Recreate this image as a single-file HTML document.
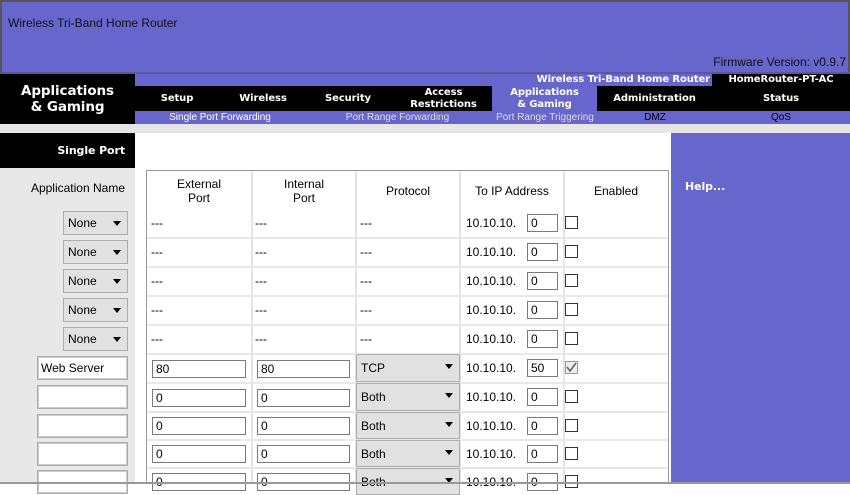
<!DOCTYPE html>
<html><head><meta charset="utf-8"><style>
*{margin:0;padding:0;box-sizing:border-box}
body{width:850px;height:484px;overflow:hidden;background:#fff;font-family:"Liberation Sans",Arial,sans-serif;font-size:12px;color:#000;position:relative}
.a{position:absolute}
.b{font-family:"DejaVu Sans",sans-serif;font-weight:bold;color:#fff;font-size:10px;text-align:center;line-height:12px;letter-spacing:-0.1px}
.tab{top:86px;height:25px;display:flex;align-items:center;justify-content:center}
.sub{top:111px;height:13px;font-size:10px;line-height:13px;color:#ddd;text-align:center}
.sel{background:#e1e1e1;border:1px solid #adadad;font-size:12px;padding-left:4px;line-height:22px}
.sel:after{content:"";position:absolute;right:6px;top:9px;border-left:4px solid transparent;border-right:4px solid transparent;border-top:5px solid #000}
.inp{background:#fff;border:1px solid #7a7a7a;font-size:12px;padding-left:3px;line-height:17px;height:18px}
.linp{background:#fff;border:1px solid #adadad;box-shadow:inset 0 0 0 1px #ccc;font-size:12px;padding-left:3px;line-height:22px;height:24px}
.cb{width:13px;height:13px;border:1px solid #333;background:#fff}
.hl{background:#e8e8e8;height:2px;left:147px;width:521px}
.vl{background:#e4e4e4;width:2px;top:171px;height:313px}
.d{font-size:12px}
</style></head><body>
<div class="a" style="left:0;top:0;width:850px;height:74px;background:#6666cc;border-left:2px solid #555;border-top:2px solid #555;border-bottom:2px solid #5a5a9a"></div>
<div class="a" style="left:8px;top:16px;font-size:12px;color:#111">Wireless Tri-Band Home Router</div>
<div class="a" style="right:4px;top:55px;font-size:12px;color:#111">Firmware Version: v0.9.7</div>
<div class="a" style="left:848px;top:0;width:2px;height:72px;background:#555"></div>
<div class="a" style="left:0;top:74px;width:135px;height:50px;background:#000"></div>
<div class="a b" style="left:0;top:83px;width:135px;font-size:13.5px;line-height:16px">Applications<br>&amp; Gaming</div>
<div class="a" style="left:135px;top:74px;width:715px;height:50px;background:#6666cc"></div>
<div class="a" style="left:135px;top:86px;width:357px;height:25px;background:#000"></div>
<div class="a" style="left:597px;top:86px;width:253px;height:25px;background:#000"></div>
<div class="a" style="left:712px;top:74px;width:138px;height:13px;background:#000"></div>
<div class="a b" style="left:500px;top:74px;width:212px;text-align:right;padding-right:2px">Wireless Tri-Band Home Router</div>
<div class="a b" style="left:712px;top:74px;width:138px">HomeRouter-PT-AC</div>
<div class="a b tab" style="left:135px;width:84px">Setup</div>
<div class="a b tab" style="left:221px;width:84px">Wireless</div>
<div class="a b tab" style="left:306px;width:84px">Security</div>
<div class="a b tab" style="left:395px;width:97px">Access<br>Restrictions</div>
<div class="a b tab" style="left:492px;width:105px">Applications<br>&amp; Gaming</div>
<div class="a b tab" style="left:597px;width:115px">Administration</div>
<div class="a b tab" style="left:712px;width:138px">Status</div>
<div class="a sub" style="left:135px;width:170px;color:#fff">Single Port Forwarding</div>
<div class="a sub" style="left:315px;width:165px">Port Range Forwarding</div>
<div class="a sub" style="left:480px;width:130px">Port Range Triggering</div>
<div class="a sub" style="left:610px;width:90px;color:#000">DMZ</div>
<div class="a sub" style="left:712px;width:138px;color:#000">QoS</div>
<div class="a" style="left:0;top:124px;width:850px;height:9px;background:#e6e6e6"></div>
<div class="a" style="left:0;top:133px;width:135px;height:351px;background:#e8e8e8"></div>
<div class="a" style="left:0;top:133px;width:135px;height:35px;background:#000"></div>
<div class="a b" style="left:0;top:145px;width:125px;text-align:right;font-size:11px">Single Port</div>
<div class="a" style="left:0;top:181px;width:125px;text-align:right">Application Name</div>
<div class="a" style="left:671px;top:133px;width:179px;height:351px;background:#6666cc"></div>
<div class="a b" style="left:685px;top:181px;text-align:left;font-size:11px">Help...</div>
<div class="a" style="left:146px;top:170px;width:523px;height:314px;border:1px solid #999;border-bottom:none"></div>
<div class="a vl" style="left:251px"></div><div class="a vl" style="left:355px"></div><div class="a vl" style="left:459px"></div><div class="a vl" style="left:563px"></div>
<div class="a" style="left:147px;top:177px;width:104px;text-align:center;line-height:14px">External<br>Port</div>
<div class="a" style="left:252px;top:177px;width:104px;text-align:center;line-height:14px">Internal<br>Port</div>
<div class="a" style="left:356px;top:184px;width:104px;text-align:center">Protocol</div>
<div class="a" style="left:460px;top:184px;width:104px;text-align:center">To IP Address</div>
<div class="a" style="left:564px;top:184px;width:104px;text-align:center">Enabled</div>

<div class="a hl" style="top:237px"></div><div class="a hl" style="top:266px"></div><div class="a hl" style="top:295px"></div><div class="a hl" style="top:324px"></div><div class="a hl" style="top:353px"></div><div class="a hl" style="top:382px"></div><div class="a hl" style="top:411px"></div><div class="a hl" style="top:439px"></div><div class="a hl" style="top:467px"></div>

<div class="a sel" style="left:63px;top:211px;width:65px;height:24px">None</div>
<div class="a sel" style="left:63px;top:240px;width:65px;height:24px">None</div>
<div class="a sel" style="left:63px;top:269px;width:65px;height:24px">None</div>
<div class="a sel" style="left:63px;top:298px;width:65px;height:24px">None</div>
<div class="a sel" style="left:63px;top:327px;width:65px;height:24px">None</div>
<div class="a d" style="left:151px;top:216px">---</div><div class="a d" style="left:255px;top:216px">---</div><div class="a d" style="left:360px;top:216px">---</div>
<div class="a d" style="left:151px;top:245px">---</div><div class="a d" style="left:255px;top:245px">---</div><div class="a d" style="left:360px;top:245px">---</div>
<div class="a d" style="left:151px;top:274px">---</div><div class="a d" style="left:255px;top:274px">---</div><div class="a d" style="left:360px;top:274px">---</div>
<div class="a d" style="left:151px;top:303px">---</div><div class="a d" style="left:255px;top:303px">---</div><div class="a d" style="left:360px;top:303px">---</div>
<div class="a d" style="left:151px;top:332px">---</div><div class="a d" style="left:255px;top:332px">---</div><div class="a d" style="left:360px;top:332px">---</div>

<div class="a linp" style="left:37px;top:356px;width:91px">Web Server</div>
<div class="a linp" style="left:37px;top:385px;width:91px"></div>
<div class="a linp" style="left:37px;top:414px;width:91px"></div>
<div class="a linp" style="left:37px;top:442px;width:91px"></div>
<div class="a linp" style="left:37px;top:470px;width:91px"></div>

<div class="a inp" style="left:152px;top:360px;width:94px">80</div><div class="a inp" style="left:257px;top:360px;width:93px">80</div>
<div class="a inp" style="left:152px;top:389px;width:94px">0</div><div class="a inp" style="left:257px;top:389px;width:93px">0</div>
<div class="a inp" style="left:152px;top:417px;width:94px">0</div><div class="a inp" style="left:257px;top:417px;width:93px">0</div>
<div class="a inp" style="left:152px;top:445px;width:94px">0</div><div class="a inp" style="left:257px;top:445px;width:93px">0</div>
<div class="a inp" style="left:152px;top:473px;width:94px">0</div><div class="a inp" style="left:257px;top:473px;width:93px">0</div>

<div class="a sel" style="left:356px;top:354px;width:104px;height:28px;line-height:27px">TCP</div>
<div class="a sel" style="left:356px;top:383px;width:104px;height:28px;line-height:27px">Both</div>
<div class="a sel" style="left:356px;top:412px;width:104px;height:27px;line-height:26px">Both</div>
<div class="a sel" style="left:356px;top:440px;width:104px;height:27px;line-height:26px">Both</div>
<div class="a sel" style="left:356px;top:468px;width:104px;height:27px;line-height:26px">Both</div>

<div class="a" style="left:466px;top:216px">10.10.10.</div><div class="a inp" style="left:527px;top:214px;width:31px">0</div><div class="a cb" style="left:565px;top:216px"></div>
<div class="a" style="left:466px;top:245px">10.10.10.</div><div class="a inp" style="left:527px;top:243px;width:31px">0</div><div class="a cb" style="left:565px;top:245px"></div>
<div class="a" style="left:466px;top:274px">10.10.10.</div><div class="a inp" style="left:527px;top:272px;width:31px">0</div><div class="a cb" style="left:565px;top:274px"></div>
<div class="a" style="left:466px;top:303px">10.10.10.</div><div class="a inp" style="left:527px;top:301px;width:31px">0</div><div class="a cb" style="left:565px;top:303px"></div>
<div class="a" style="left:466px;top:332px">10.10.10.</div><div class="a inp" style="left:527px;top:330px;width:31px">0</div><div class="a cb" style="left:565px;top:332px"></div>
<div class="a" style="left:466px;top:361px">10.10.10.</div><div class="a inp" style="left:527px;top:359px;width:31px">50</div><div class="a cb" style="left:565px;top:361px;border-color:#999;background:#eee"><svg width="11" height="11" style="position:absolute;left:0;top:0"><path d="M1 5 L4 9 L10 1" stroke="#666" stroke-width="1.6" fill="none"/></svg></div>
<div class="a" style="left:466px;top:390px">10.10.10.</div><div class="a inp" style="left:527px;top:388px;width:31px">0</div><div class="a cb" style="left:565px;top:390px"></div>
<div class="a" style="left:466px;top:419px">10.10.10.</div><div class="a inp" style="left:527px;top:417px;width:31px">0</div><div class="a cb" style="left:565px;top:419px"></div>
<div class="a" style="left:466px;top:447px">10.10.10.</div><div class="a inp" style="left:527px;top:445px;width:31px">0</div><div class="a cb" style="left:565px;top:447px"></div>
<div class="a" style="left:466px;top:475px">10.10.10.</div><div class="a inp" style="left:527px;top:473px;width:31px">0</div><div class="a cb" style="left:565px;top:475px"></div>
<div class="a" style="left:0;top:482px;width:850px;height:2px;background:#999;z-index:5"></div>
</body></html>
